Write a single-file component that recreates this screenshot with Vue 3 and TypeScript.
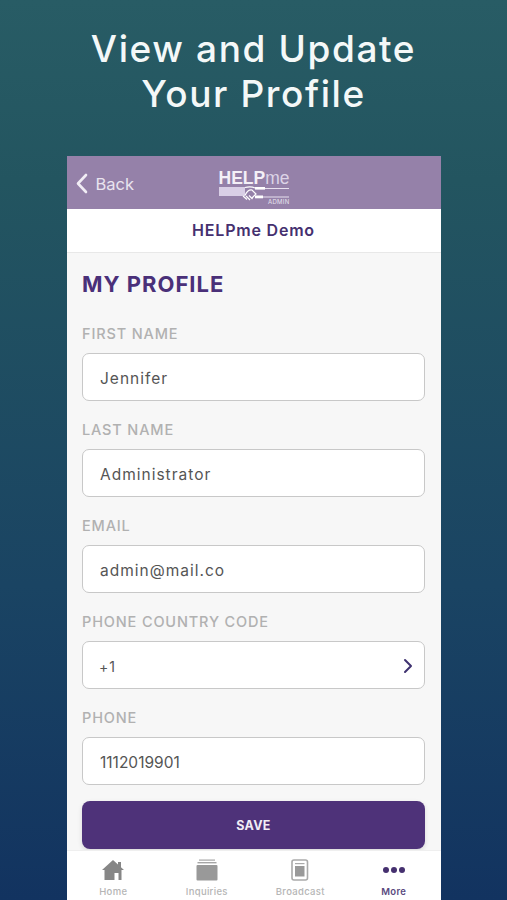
<script setup lang="ts">
const fields = [
  { label: 'FIRST NAME', value: 'Jennifer' },
  { label: 'LAST NAME', value: 'Administrator' },
  { label: 'EMAIL', value: 'admin@mail.co' },
  { label: 'PHONE COUNTRY CODE', value: '+1', select: true },
  { label: 'PHONE', value: '1112019901', digits: true },
]
</script>

<template>
  <div class="page">
    <h1 class="headline">View and Update<br />Your Profile</h1>
    <div class="phone">
      <header class="topbar">
        <div class="back">
          <svg width="13" height="21" viewBox="0 0 13 21">
            <path d="M11 2 L3 10.5 L11 19" fill="none" stroke="#f1edf5" stroke-width="2.6" stroke-linecap="round" stroke-linejoin="round" />
          </svg>
          <span>Back</span>
        </div>
        <div class="logo">
          <div class="logo-word"><b>HELP</b><span class="logo-me">me</span></div>
          <svg width="71" height="16" viewBox="0 0 71 16">
            <rect x="0" y="1" width="26" height="9" fill="#d9cfe6" />
            <path d="M26 1.5 C30 0.5 33 0.5 36 2 M26 9.5 C28 5 30 3.5 33 4 L37 8 L33 12" fill="none" stroke="#fff" stroke-width="1.2" />
            <path d="M24 10 L28 13.5 M27 10 L31 14 M30 9.5 L33.5 13" stroke="#fff" stroke-width="1.2" />
            <rect x="36" y="1" width="10" height="2.6" fill="#fff" />
            <rect x="36" y="9.5" width="8" height="2.8" fill="#fff" />
            <path d="M46 2.5 H70 M44 11 H70" stroke="#e8e1ef" stroke-width="1" />
          </svg>
          <div class="logo-sub">ADMIN</div>
        </div>
      </header>
      <div class="org">HELPme Demo</div>
      <main class="content">
        <h2 class="title">MY PROFILE</h2>
        <div v-for="f in fields" :key="f.label" class="field">
          <label class="label">{{ f.label }}</label>
          <div class="input">
            <span :class="{ small: f.select, digits: f.digits }">{{ f.value }}</span>
            <svg v-if="f.select" width="10" height="16" viewBox="0 0 10 16">
              <path d="M2 2 L8 8 L2 14" fill="none" stroke="#3f3270" stroke-width="2" stroke-linecap="round" stroke-linejoin="round" />
            </svg>
          </div>
        </div>
        <button class="save">SAVE</button>
      </main>
      <nav class="tabs">
        <div class="tab">
          <svg width="24" height="22" viewBox="0 0 24 22">
            <path d="M12 1 L23 11 L20.5 11 L20.5 21 L3.5 21 L3.5 11 L1 11 Z" fill="#868686" />
            <rect x="17" y="3" width="3" height="6" fill="#868686" />
            <rect x="13.5" y="14" width="4" height="7" fill="#fff" />
          </svg>
          <span>Home</span>
        </div>
        <div class="tab">
          <svg width="22" height="22" viewBox="0 0 22 22">
            <rect x="3" y="0.5" width="16" height="1.2" fill="#a5a5a5" />
            <rect x="1.5" y="3" width="19" height="1.4" fill="#a5a5a5" />
            <rect x="0.5" y="6" width="21" height="15.5" rx="1" fill="#999" />
          </svg>
          <span>Inquiries</span>
        </div>
        <div class="tab">
          <svg width="18" height="22" viewBox="0 0 18 22">
            <rect x="1" y="1" width="15.5" height="20" rx="2" fill="none" stroke="#aaa" stroke-width="1.6" />
            <rect x="4" y="4" width="9.5" height="1.2" fill="#aaa" />
            <rect x="4" y="7" width="9.5" height="10.5" fill="#999" />
          </svg>
          <span>Broadcast</span>
        </div>
        <div class="tab active">
          <svg width="24" height="22" viewBox="0 0 24 22">
            <circle cx="4" cy="11" r="3" fill="#45306f" />
            <circle cx="12" cy="11" r="3" fill="#45306f" />
            <circle cx="20" cy="11" r="3" fill="#45306f" />
          </svg>
          <span>More</span>
        </div>
      </nav>
    </div>
  </div>
</template>

<style>
html,
body {
  margin: 0;
  overflow: hidden;
}
</style>

<style scoped>
.page {
  width: 507px;
  height: 900px;
  overflow: hidden;
  box-sizing: border-box;
  display: flex;
  flex-direction: column;
  align-items: center;
  background: linear-gradient(180deg, #285c65 0%, #235560 20%, #1a4463 65%, #123360 100%);
  font-family: Inter, 'Open Sans', sans-serif;
}

.headline {
  margin: 27px 0 0;
  height: 129px;
  color: #f4f8f8;
  font-size: 37px;
  line-height: 44.5px;
  font-weight: 500;
  letter-spacing: 1.6px;
  text-align: center;
}

.phone {
  width: 374px;
  flex: 1;
  min-height: 0;
  display: flex;
  flex-direction: column;
  background: #f7f7f7;
}

.topbar {
  height: 53px;
  flex: none;
  background: #9581a9;
  display: flex;
  align-items: center;
  position: relative;
  color: #e9e4ef;
}

.back {
  display: flex;
  align-items: center;
  gap: 8px;
  margin-left: 8px;
  margin-top: 2px;
  font-size: 16.5px;
}

.logo {
  position: absolute;
  left: 152px;
  top: 13px;
  width: 71px;
  color: #f4f0f7;
}

.logo svg {
  display: block;
  margin-top: -1px;
}

.logo-word {
  font-family: 'Liberation Sans', sans-serif;
  font-size: 17.5px;
  line-height: 18px;
  white-space: nowrap;
}

.logo-me {
  color: #dcd3e6;
}

.logo-sub {
  position: absolute;
  right: 0;
  top: 30px;
  font-size: 6px;
  line-height: 6px;
  letter-spacing: 0.3px;
  color: #e8e1ef;
}

.org {
  height: 44px;
  flex: none;
  box-sizing: border-box;
  background: #fff;
  border-bottom: 1px solid #e8e8e8;
  color: #45306f;
  font-size: 16px;
  font-weight: 600;
  letter-spacing: 0.8px;
  padding-bottom: 1px;
  display: flex;
  align-items: center;
  justify-content: center;
}

.content {
  flex: 1;
  min-height: 0;
  overflow: hidden;
  padding: 0 15.5px;
}

.title {
  margin: 18px 0 0;
  color: #4a3079;
  font-size: 22px;
  line-height: 26px;
  font-weight: 700;
  letter-spacing: 1px;
}

.label {
  display: block;
  height: 48px;
  line-height: 18px;
  box-sizing: border-box;
  padding-top: 20px;
  color: #b1b1b1;
  font-size: 14.5px;
  font-weight: 500;
  letter-spacing: 0.85px;
}

.field:first-of-type .label {
  padding-top: 28px;
  height: 56px;
}

.input {
  height: 48px;
  box-sizing: border-box;
  background: #fff;
  border: 1px solid #c8c8c8;
  border-radius: 7px;
  display: flex;
  align-items: center;
  justify-content: space-between;
  padding: 2px 11px 0 17px;
  color: #555;
  font-size: 15.5px;
  letter-spacing: 1px;
}

.small {
  font-size: 14px;
  margin-left: -1px;
}

.digits {
  letter-spacing: 0;
}

.save {
  display: block;
  width: 100%;
  height: 48px;
  margin-top: 16px;
  border: none;
  border-radius: 8px;
  background: #4e3279;
  color: #f1edf5;
  font-family: inherit;
  font-size: 12.5px;
  font-weight: 700;
  letter-spacing: 0.3px;
  box-shadow: 0 2px 5px rgba(0, 0, 0, 0.12);
}

.tabs {
  height: 50px;
  flex: none;
  background: #fff;
  border-top: 1px solid #efefef;
  box-sizing: border-box;
  display: flex;
  padding-top: 8px;
}

.tab {
  flex: 1;
  display: flex;
  flex-direction: column;
  align-items: center;
  gap: 5px;
  color: #b5b5b5;
  font-size: 9.5px;
  font-weight: 500;
  line-height: 12px;
  letter-spacing: 0.3px;
}

.tab svg {
  flex: none;
}

.tab.active {
  color: #5a4a80;
  font-weight: 600;
}
</style>
